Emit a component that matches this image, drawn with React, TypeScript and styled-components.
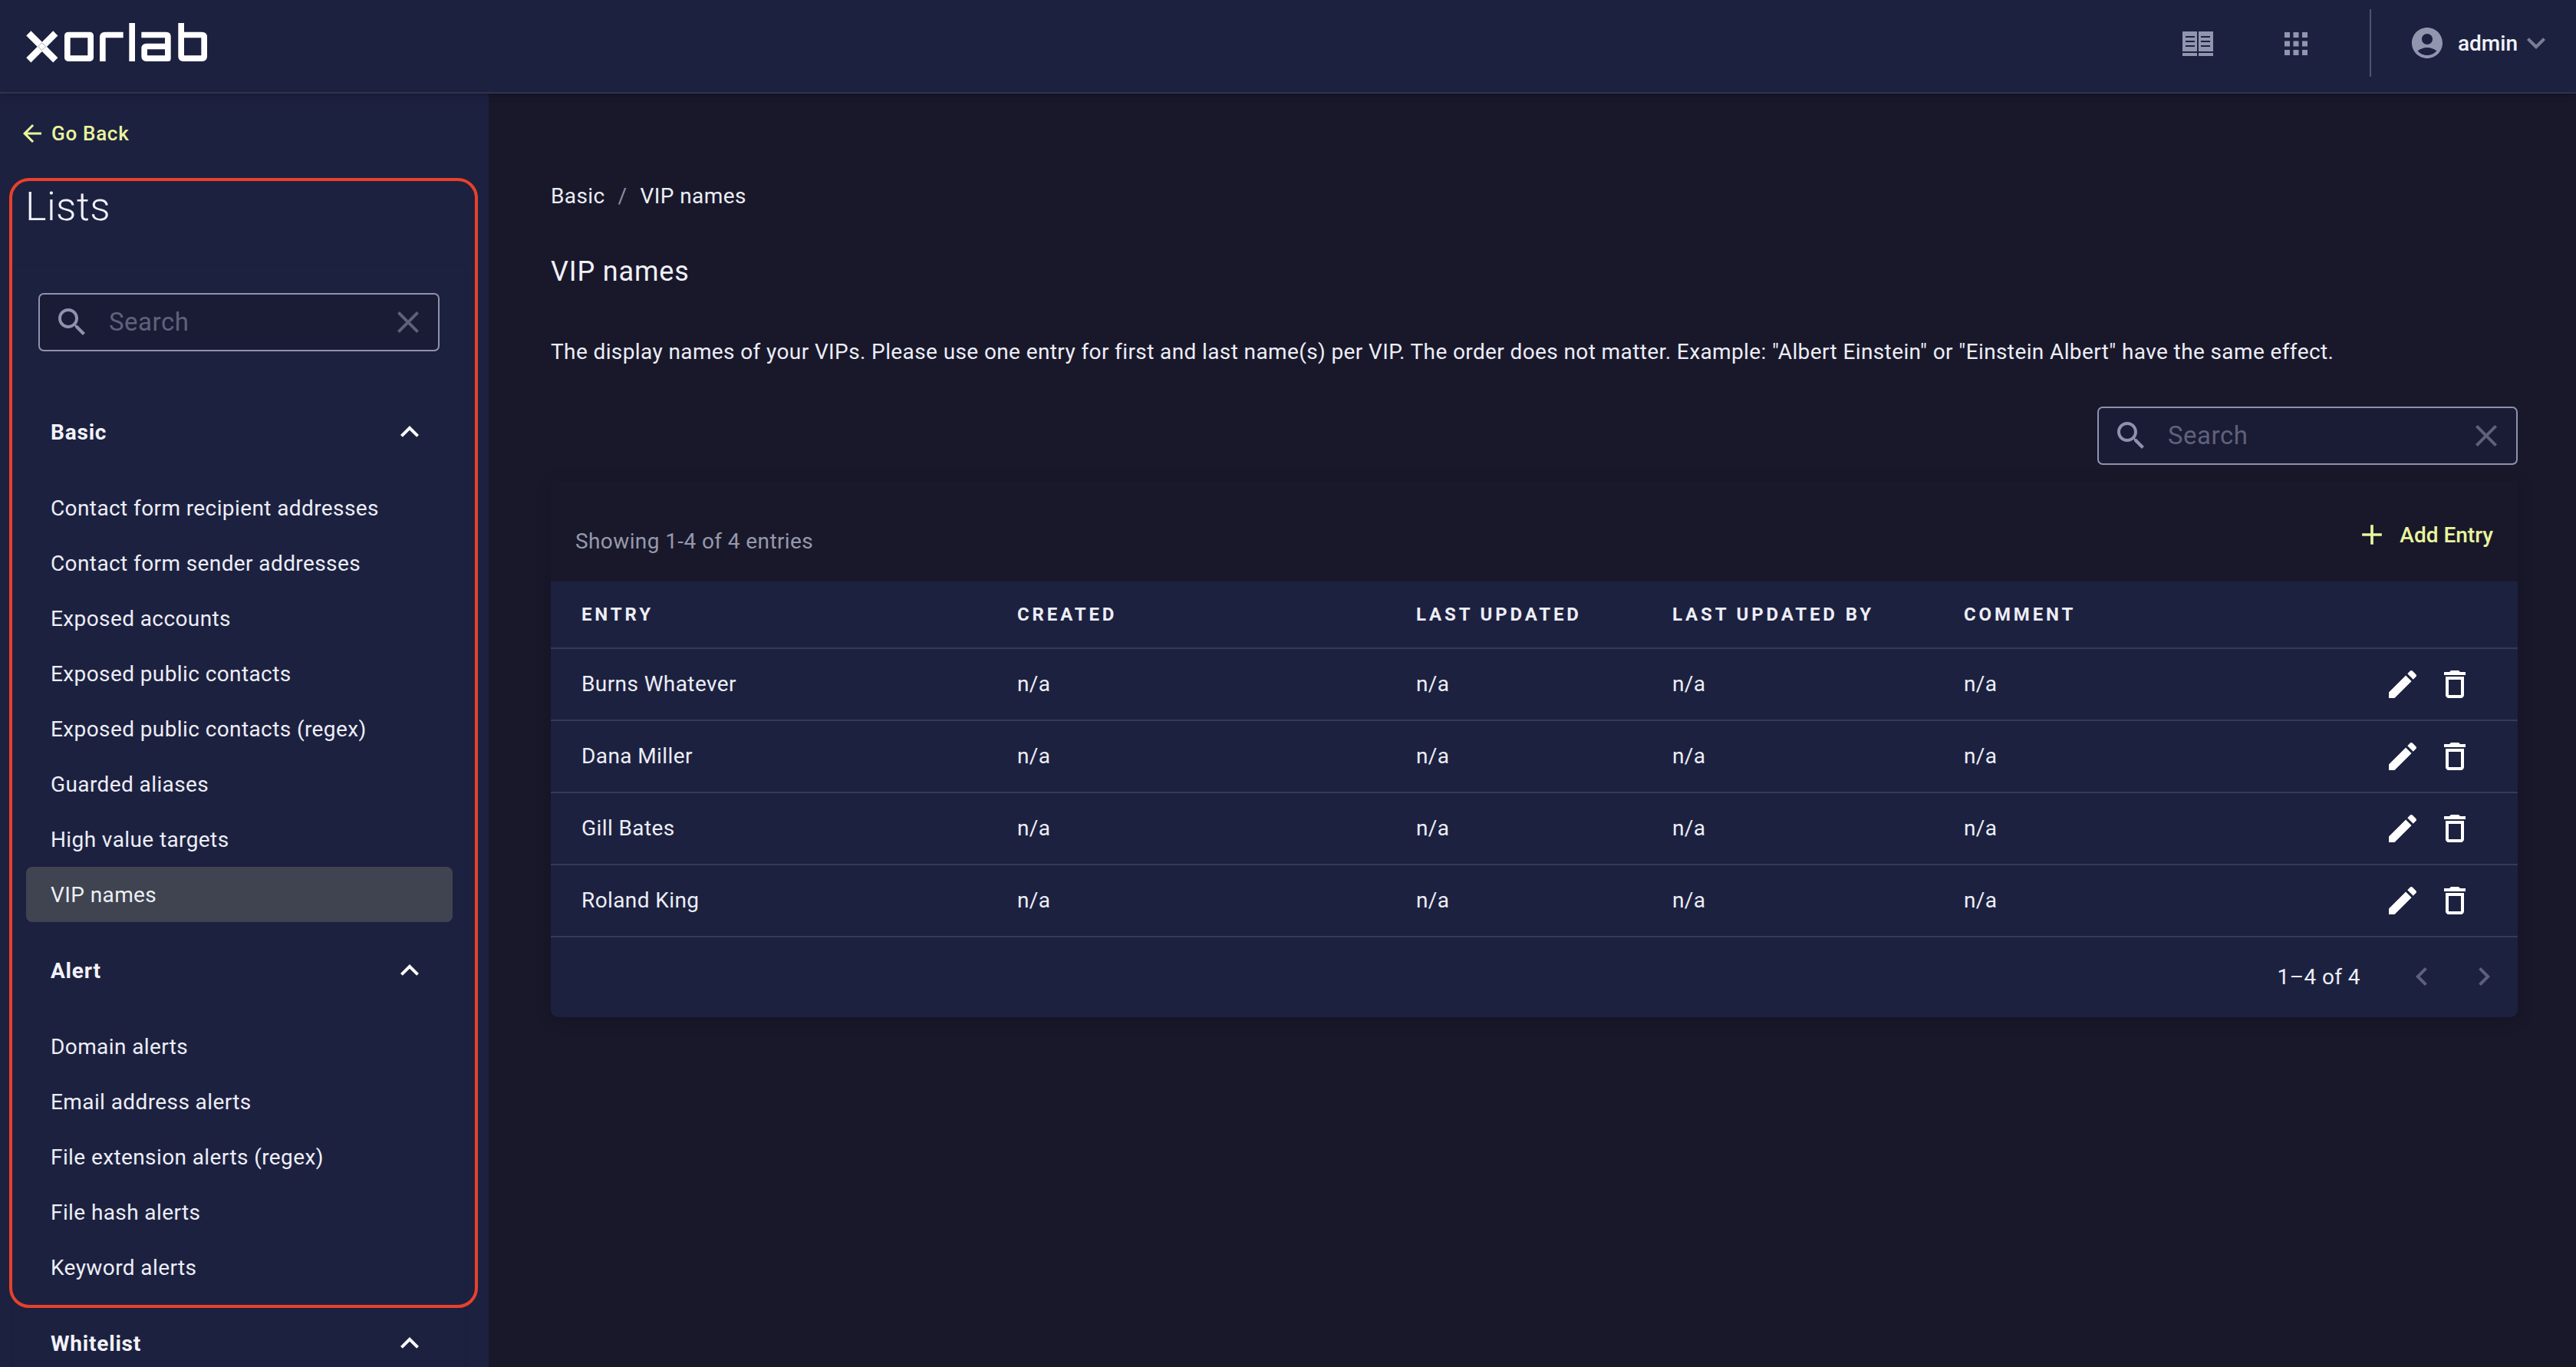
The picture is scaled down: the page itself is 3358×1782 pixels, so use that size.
import React from "react";
import styled, { createGlobalStyle } from "styled-components";

const GlobalStyle = createGlobalStyle`
  html, body { margin: 0; padding: 0; height: 100%; background: #19182b; }
  body { font-family: Roboto, "Liberation Sans", sans-serif; color: #eceef6; overflow: hidden; }
  * { box-sizing: border-box; }
`;

const Page = styled.div`
  width: 3358px;
  height: 1782px;
  display: flex;
  flex-direction: column;
  overflow: hidden;
  background: #19182b;
`;

const Header = styled.header`
  position: relative;
  z-index: 2;
  flex: none;
  height: 122px;
  display: flex;
  align-items: center;
  padding: 0 28px 2px 20px;
  background: #1d2140;
  border-bottom: 2px solid #2f334f;
  box-shadow: 0 2px 8px rgba(0, 0, 0, 0.25);
`;

const Logo = styled.svg`
  width: 270px;
  height: 75px;
  margin-bottom: 4px;
  flex: none;
`;

const HeaderRight = styled.div`
  margin-left: auto;
  display: flex;
  align-items: center;
`;

const HeaderGlyph = styled.svg<{ $w: number; $h: number; $gap: number }>`
  width: ${(p) => p.$w}px;
  height: ${(p) => p.$h}px;
  margin-right: ${(p) => p.$gap}px;
  margin-bottom: 4px;
  flex: none;
`;

const Divider = styled.div`
  width: 2px;
  height: 88px;
  margin: 0 49px 6px 0;
  background: #50536e;
`;

const UserName = styled.span`
  font-size: 28px;
  font-weight: 500;
  line-height: 40px;
  margin-bottom: 4px;
  margin-left: -1px;
  color: #f2f3f9;
  width: 78px;
`;

const Svg = styled.svg<{ $size: number; $color: string }>`
  width: ${(p) => p.$size}px;
  height: ${(p) => p.$size}px;
  flex: none;
  fill: ${(p) => p.$color};
`;

const HeaderIcon = styled(Svg)<{ $gap?: number }>`
  margin-right: ${(p) => p.$gap ?? 0}px;
  margin-bottom: 6px;
`;

const paths = {
  search:
    "M15.5 14h-.79l-.28-.27C15.41 12.59 16 11.11 16 9.5 16 5.91 13.09 3 9.5 3S3 5.91 3 9.5 5.91 16 9.5 16c1.61 0 3.09-.59 4.23-1.57l.27.28v.79l5 4.99L20.49 19l-4.99-5zm-6 0C7.01 14 5 11.99 5 9.5S7.01 5 9.5 5 14 7.01 14 9.5 11.99 14 9.5 14z",
  close:
    "M19 6.41L17.59 5 12 10.59 6.41 5 5 6.41 10.59 12 5 17.59 6.41 19 12 13.41 17.59 19 19 17.59 13.41 12z",
  less: "M12 8l-6 6 1.41 1.41L12 10.83l4.59 4.58L18 14z",
  more: "M16.59 8.59L12 13.17 7.41 8.59 6 10l6 6 6-6z",
  back: "M20 11H7.83l5.59-5.59L12 4l-8 8 8 8 1.41-1.41L7.83 13H20v-2z",
  add: "M19 13h-6v6h-2v-6H5v-2h6V5h2v6h6v2z",
  edit: "M3 17.25V21h3.75L17.81 9.94l-3.75-3.75L3 17.25zM20.71 7.04c.39-.39.39-1.02 0-1.41l-2.34-2.34c-.39-.39-1.02-.39-1.41 0l-1.83 1.83 3.75 3.75 1.83-1.83z",
  trash: "M6 19c0 1.1.9 2 2 2h8c1.1 0 2-.9 2-2V7H6v12zM8 9h8v10H8V9zm7.5-5l-1-1h-5l-1 1H5v2h14V4z",
  left: "M15.41 7.41L14 6l-6 6 6 6 1.41-1.41L10.83 12z",
  right: "M10 6L8.59 7.41 13.17 12l-4.58 4.59L10 18l6-6z",
  user: "M12 2C6.48 2 2 6.48 2 12s4.48 10 10 10 10-4.48 10-10S17.52 2 12 2zm0 4c1.93 0 3.5 1.57 3.5 3.5S13.93 13 12 13s-3.5-1.57-3.5-3.5S10.07 6 12 6zm0 14c-2.03 0-4.43-.82-6.14-2.88C7.55 15.8 9.68 15 12 15s4.45.8 6.14 2.12C16.43 19.18 14.03 20 12 20z",
};

const Body = styled.div`
  flex: 1;
  min-height: 0;
  display: flex;
`;

const Sidebar = styled.aside`
  position: relative;
  flex: none;
  width: 637px;
  background: #1d2140;
  overflow: hidden;
  display: flex;
  flex-direction: column;
`;

const GoBack = styled.a`
  display: flex;
  align-items: center;
  gap: 7px;
  height: 52px;
  margin: 34px 0 0 24px;
  font-size: 26px;
  font-weight: 500;
  letter-spacing: 0.7px;
  color: #e9f59c;
`;

const SideTitle = styled.h2`
  margin: 50px 0 49px 33px;
  font-size: 52px;
  line-height: 56px;
  font-weight: 300;
  letter-spacing: 0.5px;
  color: #f0f1f8;
`;

const SideCard = styled.div`
  flex: none;
  margin: 0 32px 0 18px;
  padding: 35px 0 0;
  box-shadow: 0 0 6px rgba(0, 0, 0, 0.04);
  background: #1d2140;
`;

const HighlightFrame = styled.div`
  position: absolute;
  left: 12px;
  top: 110px;
  width: 611px;
  height: 1473px;
  border: 4px solid #e8412a;
  border-radius: 26px;
  pointer-events: none;
`;

const SearchBox = styled.div<{ $width: number }>`
  width: ${(p) => p.$width}px;
  height: 76px;
  flex: none;
  display: flex;
  align-items: center;
  padding: 0 15px 0 18px;
  border: 2px solid #8f92ad;
  border-radius: 7px;
  background: #1a1b35;
`;

const SearchInput = styled.input`
  flex: 1;
  min-width: 0;
  margin-left: 24px;
  padding: 0 0 2px;
  border: 0;
  outline: 0;
  background: transparent;
  color: #eceef6;
  font-family: Roboto, "Liberation Sans", sans-serif;
  font-size: 33px;
  letter-spacing: 0.5px;
  &::placeholder {
    color: #5f617a;
    opacity: 1;
  }
`;

const SideSearch = styled.div`
  margin: 0 0 42px 32px;
`;

const SectionHead = styled.div`
  height: 126px;
  display: flex;
  align-items: center;
  justify-content: space-between;
  padding: 0 47px 0 48px;
  font-size: 28px;
  font-weight: 700;
  letter-spacing: 0.8px;
  color: #f2f3f9;
`;

const NavList = styled.ul`
  list-style: none;
  margin: 0;
  padding: 0;
`;

const NavItem = styled.li<{ $active?: boolean }>`
  height: 72px;
  margin: 0 15px 0 16px;
  padding-left: 32px;
  display: flex;
  align-items: center;
  font-size: 28px;
  letter-spacing: 0.4px;
  color: #eceef6;
  border-radius: 8px;
  background: ${(p) => (p.$active ? "#3f4450" : "transparent")};
`;

const Main = styled.main`
  flex: 1;
  min-width: 0;
  display: flex;
  flex-direction: column;
  padding: 113px 76px 0 81px;
`;

const Crumbs = styled.nav`
  display: flex;
  align-items: center;
  height: 40px;
  font-size: 28px;
  letter-spacing: 0.4px;
  color: #eceef6;
`;

const CrumbSep = styled.span`
  margin: 0 17px;
  color: #8c8ea3;
`;

const Title = styled.h1`
  margin: 55px 0 0;
  font-size: 36px;
  line-height: 48px;
  font-weight: 400;
  letter-spacing: 0.85px;
  color: #f0f1f8;
`;

const Description = styled.p`
  margin: 61px 0 0;
  font-size: 28px;
  line-height: 40px;
  letter-spacing: 0.39px;
  color: #eceef6;
  white-space: nowrap;
`;

const MainSearch = styled.div`
  align-self: flex-end;
  margin-top: 51px;
`;

const Card = styled.section`
  margin-top: 21px;
  border-radius: 0 0 10px 10px;
  box-shadow: 0 4px 20px rgba(0, 0, 0, 0.18);
`;

const Toolbar = styled.div`
  height: 131px;
  padding: 48px 32px 0;
  display: flex;
  justify-content: space-between;
  align-items: flex-start;
`;

const Showing = styled.span`
  margin-top: 11px;
  font-size: 28px;
  line-height: 40px;
  letter-spacing: 0.4px;
  color: #9698ab;
`;

const AddEntry = styled.button`
  height: 44px;
  display: flex;
  align-items: center;
  gap: 14px;
  padding: 0;
  border: 0;
  background: none;
  font-family: Roboto, "Liberation Sans", sans-serif;
  font-size: 28px;
  font-weight: 500;
  color: #e9f59c;
`;

const columns = "568px 520px 334px 380px 1fr 174px";

const HeadRow = styled.div`
  display: grid;
  grid-template-columns: ${columns};
  align-items: center;
  height: 88px;
  background: #1d2140;
  border-bottom: 2px solid #363a58;
`;

const HeadCell = styled.div`
  padding-left: 40px;
  font-size: 24px;
  font-weight: 700;
  letter-spacing: 3.85px;
  color: #eceef6;
`;

const Row = styled.div`
  display: grid;
  grid-template-columns: ${columns};
  align-items: center;
  height: 94px;
  background: #1d2140;
  border-bottom: 2px solid #363a58;
`;

const Cell = styled.div`
  padding: 0 0 2px 40px;
  font-size: 28px;
  letter-spacing: 0.4px;
  color: #eceef6;
`;

const Actions = styled.div`
  display: flex;
  gap: 20px;
`;

const Footer = styled.div`
  height: 104px;
  padding: 0 20px 2px;
  display: flex;
  align-items: center;
  justify-content: flex-end;
  background: #1d2140;
  border-radius: 0 0 10px 10px;
`;

const PageInfo = styled.span`
  margin-right: 56px;
  font-size: 28px;
  letter-spacing: 0.4px;
  color: #eceef6;
`;

const PagerGap = styled.span`
  width: 33px;
`;

const Icon = ({ d, size, color }: { d: string; size: number; color: string }) => (
  <Svg viewBox="0 0 24 24" $size={size} $color={color}>
    <path d={d} />
  </Svg>
);

const Search = ({ width }: { width: number }) => (
  <SearchBox $width={width}>
    <Icon d={paths.search} size={48} color="#8f92ad" />
    <SearchInput placeholder="Search" readOnly />
    <Icon d={paths.close} size={48} color="#5f617a" />
  </SearchBox>
);

const XorlabLogo = () => (
  <Logo viewBox="0 0 810 225">
    <g stroke="#fff" strokeWidth="26" fill="none">
      <path d="M52 70L157 175M157 70L52 175" />
    </g>
    <path d="M104 107L119 122L104 137L89 122Z" fill="none" stroke="#1d2140" strokeWidth="2.5" opacity="0.45" />
    <g stroke="#fff" strokeWidth="23" fill="none" strokeLinejoin="round">
      <rect x="203.5" y="76.5" width="91" height="92" rx="3" />
      <path d="M341.500 180V86Q341.500 76.500 351 76.500H422" />
      <path d="M456.500 30V180" />
      <path d="M493 76.500H590Q596.500 76.500 596.500 83V168.500H513Q504.500 168.500 504.500 160V130Q504.500 121.500 513 121.500H596" />
      <path d="M648.500 30V160Q648.500 168.500 657 168.500H730Q738.500 168.500 738.500 160V85Q738.500 76.500 730 76.500H648" />
    </g>
  </Logo>
);

const BookGlyph = () => (
  <HeaderGlyph viewBox="0 0 40 32" $w={40} $h={32} $gap={93}>
    <path
      fill="#9295ae"
      fillRule="evenodd"
      d="M0 0h19v26H0zM21 0h19v26H21zM0 28h19v4H0zM21 28h19v4H21zM4 6v2h12V6zM4 12v2h12v-2zM4 18v2h12v-2zM24 6v2h12V6zM24 12v2h12v-2zM24 18v2h12v-2z"
    />
    <path fill="#1d2140" d="M17.500 26h5L20 29.500z" />
  </HeaderGlyph>
);

const AppsGlyph = () => (
  <HeaderGlyph viewBox="0 0 30 30" $w={30} $h={30} $gap={81}>
    <g fill="#9295ae">
      {[0, 11.5, 23].flatMap((y) =>
        [0, 11.5, 23].map((x) => <rect key={`${x}-${y}`} x={x} y={y} width="7" height="7" />)
      )}
    </g>
  </HeaderGlyph>
);

const basic = [
  "Contact form recipient addresses",
  "Contact form sender addresses",
  "Exposed accounts",
  "Exposed public contacts",
  "Exposed public contacts (regex)",
  "Guarded aliases",
  "High value targets",
  "VIP names",
];
const alert = [
  "Domain alerts",
  "Email address alerts",
  "File extension alerts (regex)",
  "File hash alerts",
  "Keyword alerts",
];
const headers = ["ENTRY", "CREATED", "LAST UPDATED", "LAST UPDATED BY", "COMMENT"];
const entries = ["Burns Whatever", "Dana Miller", "Gill Bates", "Roland King"];

const Section = ({ title, items, active }: { title: string; items: string[]; active?: string }) => (
  <>
    <SectionHead>
      {title}
      <Icon d={paths.less} size={48} color="#ffffff" />
    </SectionHead>
    <NavList>
      {items.map((item) => (
        <NavItem key={item} $active={item === active}>
          {item}
        </NavItem>
      ))}
    </NavList>
  </>
);

export default function App() {
  return (
    <Page>
      <GlobalStyle />
      <Header>
        <XorlabLogo />
        <HeaderRight>
          <BookGlyph />
          <AppsGlyph />
          <Divider />
          <HeaderIcon viewBox="0 0 24 24" $size={48} $color="#9295ae" $gap={17}>
            <path d={paths.user} />
          </HeaderIcon>
          <UserName>admin</UserName>
          <HeaderIcon viewBox="0 0 24 24" $size={48} $color="#7b7d96">
            <path d={paths.more} />
          </HeaderIcon>
        </HeaderRight>
      </Header>
      <Body>
        <Sidebar>
          <GoBack>
            <Icon d={paths.back} size={36} color="#e9f59c" />
            Go Back
          </GoBack>
          <SideTitle>Lists</SideTitle>
          <SideCard>
            <SideSearch>
              <Search width={523} />
            </SideSearch>
            <Section title="Basic" items={basic} active="VIP names" />
            <Section title="Alert" items={alert} />
            <SectionHead>
              Whitelist
              <Icon d={paths.less} size={48} color="#ffffff" />
            </SectionHead>
          </SideCard>
          <HighlightFrame />
        </Sidebar>
        <Main>
          <Crumbs>
            Basic
            <CrumbSep>/</CrumbSep>
            VIP names
          </Crumbs>
          <Title>VIP names</Title>
          <Description>
            The display names of your VIPs. Please use one entry for first and last name(s) per VIP. The order does not
            matter. Example: "Albert Einstein" or "Einstein Albert" have the same effect.
          </Description>
          <MainSearch>
            <Search width={548} />
          </MainSearch>
          <Card>
            <Toolbar>
              <Showing>Showing 1-4 of 4 entries</Showing>
              <AddEntry>
                <Icon d={paths.add} size={44} color="#e9f59c" />
                Add Entry
              </AddEntry>
            </Toolbar>
            <HeadRow>
              {headers.map((h) => (
                <HeadCell key={h}>{h}</HeadCell>
              ))}
            </HeadRow>
            {entries.map((name) => (
              <Row key={name}>
                <Cell>{name}</Cell>
                <Cell>n/a</Cell>
                <Cell>n/a</Cell>
                <Cell>n/a</Cell>
                <Cell>n/a</Cell>
                <Actions>
                  <Icon d={paths.edit} size={48} color="#ffffff" />
                  <Icon d={paths.trash} size={48} color="#ffffff" />
                </Actions>
              </Row>
            ))}
            <Footer>
              <PageInfo>1–4 of 4</PageInfo>
              <Icon d={paths.left} size={48} color="#5f617a" />
              <PagerGap />
              <Icon d={paths.right} size={48} color="#5f617a" />
            </Footer>
          </Card>
        </Main>
      </Body>
    </Page>
  );
}
